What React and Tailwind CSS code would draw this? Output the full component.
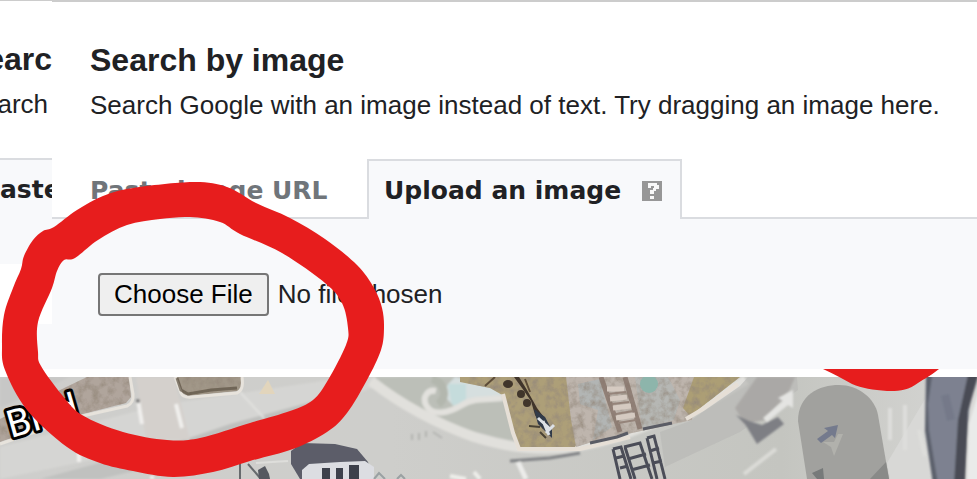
const outerRing = [
  [33, 240], [43, 231], [54, 227], [77, 210], [103, 196], [133, 188], [193, 182], [227, 187], [256, 203], [290, 218],
  [325, 239], [357, 265], [374, 288], [382, 308], [384, 328], [381, 350], [367, 380], [347, 413], [327, 432],
  [293, 449], [250, 461], [213, 472], [173, 477], [133, 471], [100, 463], [67, 447], [27, 410],
  [5, 370], [2, 345], [4, 315], [13, 288], [21, 269], [24, 256],
];
const innerRing = [
  [64, 260], [75, 258], [98, 240], [127, 225], [160, 219], [190, 217], [220, 222], [240, 234], [282, 253],
  [325, 283], [342, 303], [348, 328], [346, 345], [328, 380], [313, 400], [290, 411],
  [250, 423], [200, 438], [167, 440], [123, 432], [82, 415], [62, 395], [41, 366], [38, 352], [38, 322], [52, 288], [57, 271],
];

function smooth(points) {
  const n = points.length;
  let d = `M${points[0]}`;
  for (let i = 0; i < n; i++) {
    const a = points[(i + n - 1) % n];
    const b = points[i];
    const c = points[(i + 1) % n];
    const e = points[(i + 2) % n];
    d += `C${b[0] + (c[0] - a[0]) / 6} ${b[1] + (c[1] - a[1]) / 6} ${c[0] - (e[0] - b[0]) / 6} ${c[1] - (e[1] - b[1]) / 6} ${c[0]} ${c[1]}`;
  }
  return d + "Z";
}

function Marker() {
  return (
    <svg className="pointer-events-none absolute top-0 left-0" width="977" height="479" viewBox="0 0 977 479" fill="#e71d1d" aria-hidden="true">
      <path fillRule="evenodd" d={smooth(outerRing) + smooth(innerRing)} />
      <path d="M823 369H939C929 377 922 380 915 385C906 391 897 391 887 391C873 390 862 388 852 384C843 379 834 374 823 369Z" />
    </svg>
  );
}

function AerialMap() {
  return (
    <svg className="block h-[102px] w-full" viewBox="0 377 977 102" preserveAspectRatio="xMinYMin slice" role="img" aria-label="Aerial map">
      <defs>
        <filter id="grain" x="0" y="0" width="100%" height="100%">
          <feTurbulence type="fractalNoise" baseFrequency="0.13" numOctaves="4" seed="8" result="n" />
          <feColorMatrix in="n" type="matrix" values="0 0 0 0 .3  0 0 0 0 .25  0 0 0 0 .2  0 1.8 0 0 -.7" result="g" />
          <feComposite in="g" in2="SourceAlpha" operator="in" result="gi" />
          <feMerge result="m"><feMergeNode in="SourceGraphic" /><feMergeNode in="gi" /></feMerge>
          <feGaussianBlur in="m" stdDeviation=".6" />
        </filter>
        <filter id="soft" x="-10%" y="-10%" width="120%" height="120%"><feGaussianBlur stdDeviation="1" /></filter>
        <filter id="fine" x="-10%" y="-10%" width="120%" height="120%"><feGaussianBlur stdDeviation=".6" /></filter>
        <linearGradient id="road"><stop stopColor="#cececc" /><stop offset=".4" stopColor="#cececb" /><stop offset=".8" stopColor="#c4c5c0" /><stop offset="1" stopColor="#d6d6d4" /></linearGradient>
      </defs>
      <rect y="377" width="977" height="102" fill="url(#road)" />

      <g filter="url(#soft)">
        <path d="M0 377H70L0 408Z" fill="#c7c7c6" />
        <path d="M0 447L160 405L350 377H400L290 419L0 479Z" fill="#d5d5d3" />
        <path d="M160 448L230 424L318 400L300 418L240 430L160 450Z" fill="#bfc0be" />
        <path d="M40 479L110 460L160 465L100 479Z" fill="#c0c1bf" />
        <path d="M136 377L146 440H190L174 377Z" fill="#d4d0cc" />
        <path d="M138 400L142 424M176 404L182 428M79 452V462M152 476V479" stroke="#f0efed" strokeWidth="4" />
        <path d="M240 392L264 418" stroke="#e1e1de" strokeWidth="2" />
        <circle cx="138" cy="401" r="2" fill="#777" />
      </g>
      <g filter="url(#grain)">
        <path d="M0 419L87 377H129L131 397L126 403L75 416L0 442Z" fill="#b0a59c" />
        <path d="M176 377H241L242 387L237 391L188 396L180 392Z" fill="#a19788" />
      </g>
      <g filter="url(#fine)">
        <path d="M0 444L78 417L127 406Q134 403 133 394L130 377M175 377L181 393Q183 398 192 397L237 393Q244 390 242 377" fill="none" stroke="#e7e3dc" strokeWidth="3" />
        <path d="M177 378L181 390L188 394L211 390L237 388" fill="none" stroke="#5c5142" strokeWidth="3" opacity=".7" />
        <path d="M268 380L275 394H259Z" fill="#e2d5bc" />
      </g>

      <g filter="url(#soft)">
        <path d="M374 377H512L516 442L460 428L405 402Z" fill="#bcbfb8" />
        <path d="M448 384L455 377L494 386L504 395L478 400L456 408L443 395Z" fill="#d6dfdf" />
        <path d="M448 384H466V406L452 405Z" fill="#c5dcdc" />
        <path d="M371 381C404 407 438 424 474 437C530 455 575 450 617 437L706 403L746 380" fill="none" stroke="#e1e0dc" strokeWidth="10" />
        <path d="M436 391C428 389 422 397 426 405C432 417 449 413 462 405C474 397 490 400 503 398" fill="none" stroke="#e2e1dd" strokeWidth="6" />
        <path d="M432 379C444 382 449 397 438 404" fill="none" stroke="#b3b7ae" strokeWidth="8" />
        <path d="M412 434V440M419 433V440M426 431V437M433 432L442 438" stroke="#b3b4b1" strokeWidth="2" />
        <path d="M450 476L466 479M474 472L480 479" fill="none" stroke="#eeeeea" strokeWidth="4" />
        <path d="M510 461L550 458L580 453" fill="none" stroke="#7f8184" strokeWidth="3" />
        <path d="M518 462L526 479" stroke="#ececea" strokeWidth="5" />
      </g>

      <g filter="url(#grain)">
        <path d="M460 377H585L576 410L584 430L575 447H518L504 396L490 388L460 382Z" fill="#ad9f78" />
        <path d="M566 377H700L692 420L632 433L592 442L576 447L571 420Z" fill="#beb5ad" />
        <path d="M578 384L600 379L612 427L593 440L598 410L580 404Z" fill="#b2b5b4" />
        <path d="M635 377H668L680 400L674 420L642 429Z" fill="#b6b7b4" />
        <path d="M694 377H740L690 416L683 408Z" fill="#ac9e74" />
      </g>
      <g filter="url(#fine)">
        <path d="M503 394L513 433L519 449H580L630 437M686 419L703 409L738 384" fill="none" stroke="#e6dfd6" strokeWidth="4" />
        <path d="M601 377L620 432M625 377L640 429" stroke="#86746a" strokeWidth="5" opacity=".8" />
        <path d="M607 389H624M610 399L627 397M613 408L631 406M616 418L635 415" stroke="#d5cac1" strokeWidth="5" />
        <path d="M608 394L626 392M612 404L629 402M616 414L633 411M618 423L636 420" stroke="#95847a" strokeWidth="2" />
        <circle cx="649" cy="384" r="9" fill="#8db5ab" />
        <g fill="#40342c">
          <ellipse cx="508" cy="384" rx="5" ry="4" /><ellipse cx="521" cy="394" rx="4" ry="4" /><ellipse cx="527" cy="403" rx="4" ry="4" />
          <path d="M514 377L519 377L527 390L537 408L546 420L543 429L535 415L531 401L522 388Z" />
          <path d="M485 386L495 377M525 379L530 392" stroke="#5c4c38" strokeWidth="2" />
        </g>
        <path d="M534 409L545 417L552 430L552 438L538 424Z" fill="#303b49" />
        <path d="M538 418L549 428M543 421L549 435M554 425L546 433" stroke="#dde1e6" strokeWidth="3" />
        <path d="M529 426L540 427M540 432L546 438" stroke="#494336" strokeWidth="2" />
        <path d="M590 443L617 437L628 433M643 429L672 423" fill="none" stroke="#5a5c65" strokeWidth="3" />
      </g>

      <path d="M665 467L740 432L798 390L797 377H748L740 386L690 421L660 432Z" fill="#b9b9b6" opacity=".7" />
      <path d="M735 408L757 377H795L789 391L765 420L745 424Z" fill="#aaa8a6" filter="url(#soft)" />
      <path d="M736 415L745 424L757 444L784 424L778 417L762 425L749 421Z" fill="#7e7f84" filter="url(#soft)" />
      <path d="M763 418L783 401L778 398L793 390L793 408L788 405L767 422Z" fill="#e4e4e2" filter="url(#soft)" />
      <path d="M744 474L776 449" stroke="#dbdbd7" strokeWidth="4" filter="url(#soft)" />
      <g fill="none" stroke="#4b4d58" strokeWidth="3" filter="url(#fine)">
        <path d="M613 449L621 447L631 479M613 449L620 479M624 447L640 443L652 479M625 447L635 479M647 438L654 436L665 479M647 438L657 479M616 458L624 456M620 468L628 466M628 459L646 454M631 470L650 465M650 451L659 448M653 463L662 461" />
      </g>

      <g filter="url(#fine)">
        <path d="M291 451L302 443L335 444L357 449L368 462L373 479H300L291 464Z" fill="#5b5d69" />
        <path d="M302 470L309 464L340 462L365 461L374 467L374 479H302Z" fill="#dcdde2" />
        <path d="M240 463V479M248 464L261 479" stroke="#666a6d" strokeWidth="2" />
        <path d="M258 470L265 466L269 474L270 479H259Z" fill="#545860" />
        <path d="M374 479L379 473L385 479M397 479L401 475L405 479" stroke="#9aa1a3" strokeWidth="2" fill="none" />
        <path d="M322 468H330V479H322ZM336 468H343V479H336ZM349 465H359V479H349Z" fill="#3c3f4b" />
        <path d="M256 463L288 461" stroke="#dededb" strokeWidth="2" />
      </g>

      <path d="M887 463L925 399V377H977V479H890Z" fill="#d8d8d6" />
      <path d="M890 408V440M905 405V450M919 430L925 456" stroke="#dededb" strokeWidth="4" filter="url(#soft)" />
      <path d="M798 421C798 395 819 385 839 385C858 385 875 398 878 415L889 479H807Z" fill="#a1a19e" />
      <path d="M870 479L886 462L889 479Z" fill="#898a88" />
      <path d="M817 439L828 431L824 428L838 425L835 438L832 435L821 443Z" fill="#747a8d" />
      <path d="M823 442L834 442L838 434L843 434L834 456L831 447Z" fill="#b1b1ac" filter="url(#fine)" />
      <path d="M812 473L823 468L824 479H817Z" fill="#777a7a" filter="url(#fine)" />
      <g filter="url(#soft)">
        <path d="M926 370H976L969 410L964 484H934L927 431Z" fill="#7d8190" />
        <path d="M926 370H933L928 404L929 430L938 484H933L925 431Z" fill="#5c606c" />
        <path d="M969 370H980L968 411L967 439L965 484H954L958 420Z" fill="#484b54" />
        <path d="M980 386V484H967L969 424Z" fill="#eaebea" />
        <path d="M945 395L951 420" stroke="#747989" strokeWidth="8" fill="none" />
      </g>
      <text transform="translate(11 438) rotate(-16)" className="font-['Roboto'] text-[38px]" fill="#fff" stroke="#000" strokeWidth="6" strokeLinejoin="round" paintOrder="stroke">Blvd</text>
    </svg>
  );
}

function HelpIcon() {
  return (
    <svg width="20" height="20" viewBox="0 0 20 20" aria-hidden="true">
      <path fill="#979797" d="M0 0H20V20H0Z" />
      <path d="M6 2H15V4H17V8H14V10H12V13H8V9H11V7H12V5H9V7H6Z" fill="#f8f8f8" />
      <path d="M8 15H12V18H8Z" fill="#f8f8f8" />
    </svg>
  );
}

export default function App() {
  return (
    <main className="relative overflow-hidden bg-white font-['Liberation_Sans',Arial,sans-serif] text-[#202124]">
      <div className="flex">
        <aside className="flex w-[52px] shrink-0 flex-col overflow-hidden border-t border-[#ccc]" aria-hidden="true">
          <div className="flex h-[157px] flex-col items-end pt-10 whitespace-nowrap">
            <strong className="text-[32px] leading-9">earc</strong>
            <p className="mt-[9px] mr-1 text-[26px] leading-9">arch</p>
          </div>
          <div className="h-[106px] border-t-2 border-[#dadce0] bg-[#f8f9fb] pt-3 font-['DejaVu_Sans',sans-serif] text-[25px] leading-9 font-bold">aste</div>
          <div className="h-[60px] bg-white" />
          <div className="ml-5 grow bg-[#f8f9fb]" />
        </aside>
        <section className="flex min-w-0 grow flex-col border-t-2 border-[#ccc]">
          <header className="h-[157px] pt-10 pl-[38px] whitespace-nowrap">
            <h1 className="text-[32px] leading-9 font-bold">Search by image</h1>
            <p className="mt-[9px] text-[26px] leading-9">Search Google with an image instead of text. Try dragging an image here.</p>
          </header>
          <nav className="flex h-[60px] font-['DejaVu_Sans',sans-serif] text-[25px] leading-9 font-bold whitespace-nowrap">
            <div className="w-[315px] border-b-2 border-[#dadce0] pt-[14px] pl-[38px]">
              <button type="button" className="text-[#70757a]">Paste image URL</button>
            </div>
            <div className="flex w-[315px] items-start justify-between border-2 border-b-0 border-[#dadce0] bg-[#f8f9fb] pt-3 pr-[18px] pl-[15px]">
              <button type="button">Upload an image</button>
              <a href="#help" aria-label="Help" className="mt-2"><HelpIcon /></a>
            </div>
            <div className="grow border-b-2 border-[#dadce0]" />
          </nav>
          <div className="bg-[#f8f9fb] pt-[54px] pb-[53px] pl-[46px]">
            <input type="file" aria-label="Choose an image" className="block text-[26px] leading-8 file:mr-[9px] file:h-[43px] file:rounded-[4px] file:border-2 file:border-solid file:border-[#767676] file:bg-[#efefef] file:px-[14px] file:pb-[2px] file:text-black" />
          </div>
        </section>
      </div>
      <div className="pt-2"><AerialMap /></div>
      <Marker />
    </main>
  );
}
